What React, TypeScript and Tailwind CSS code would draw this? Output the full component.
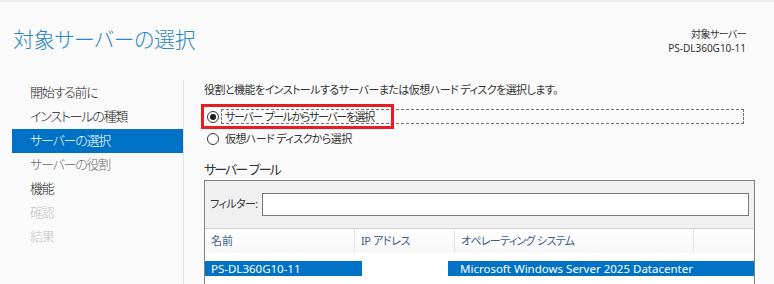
import React from 'react';

const navItems = [
  { label: '開始する前に', state: 'normal' },
  { label: 'インストールの種類', state: 'normal' },
  { label: 'サーバーの選択', state: 'active' },
  { label: 'サーバーの役割', state: 'soft' },
  { label: '機能', state: 'normal' },
  { label: '確認', state: 'disabled' },
  { label: '結果', state: 'disabled' },
];

const Radio: React.FC<{ checked?: boolean }> = ({ checked }) => (
  <span className="w-[12px] h-[12px] rounded-full border border-[#333] bg-white flex items-center justify-center shrink-0">
    {checked && <span className="w-[6px] h-[6px] rounded-full bg-[#1a1a1a]" />}
  </span>
);

const App: React.FC = () => {
  return (
    <div className="w-[774px] h-[284px] overflow-hidden bg-[#fafafa] border-t-2 border-[#eceff3] text-[#333] [font-family:'Noto_Sans','Noto_Sans_CJK_JP',sans-serif] [font-feature-settings:'palt']">
      {/* header */}
      <div className="flex justify-between items-start h-[78px]">
        <h1 className="ml-[13px] mt-[27px] text-[21px] font-light text-[#2b86c4] leading-none tracking-[-0.3px]">
          対象サーバーの選択
        </h1>
        <div className="mr-[28px] mt-[25px] text-right text-[10px] leading-[14px] text-[#333]">
          <div className="tracking-[-0.6px]">対象サーバー</div>
          <div>PS-DL360G10-11</div>
        </div>
      </div>

      <div className="flex">
        {/* nav */}
        <div className="w-[184px] pl-[12px] pt-[1px] border-r border-[#e3e3e3] h-[206px]">
          {navItems.map((item) => (
            <div
              key={item.label}
              className={
                'h-[24px] pl-[18px] flex items-center text-[13px] font-light tracking-[-1.2px] ' +
                (item.state === 'active'
                  ? 'bg-[#0072c6] text-white'
                  : item.state === 'disabled'
                  ? 'text-[#c4c4c4]'
                  : item.state === 'soft'
                  ? 'text-[#6a6a6a]'
                  : 'text-[#222]')
              }
            >
              {item.label}
            </div>
          ))}
        </div>

        {/* content */}
        <div className="flex-1 pl-[20px] text-[12px]">
          <p className="mt-[1px] leading-[18px] text-[11px] tracking-[-0.55px]">役割と機能をインストールするサーバーまたは仮想ハード ディスクを選択します。</p>

          <div className="mt-[5px] relative">
            <div className="absolute left-[-3px] top-[0px] w-[193px] h-[25px] border-[3px] border-[#e81c24]" />
            <div className="h-[25px] flex items-center pl-[3px]">
              <Radio checked />
              <span className="ml-[2px] pl-[3px] w-[523px] h-[15px] flex items-center border border-dashed border-[#707070] leading-none text-[11px] tracking-[-1.4px] whitespace-pre">
                サーバー  プールからサーバーを選択
              </span>
            </div>
            <div className="h-[19px] flex items-center pl-[3px]">
              <Radio />
              <span className="ml-[6px] leading-none text-[11px] tracking-[-0.6px]">仮想ハード ディスクから選択</span>
            </div>
          </div>

          <h2 className="mt-[11px] text-[13px] leading-[20px] text-[#333] tracking-[-2px] whitespace-pre">サーバー  プール</h2>

          <div className="mt-[1px] w-[551px] border border-[#828282] bg-white h-[120px]">
            <div className="bg-[#f0f0f0] h-[48px] flex items-center pl-[5px] pr-[5px] border-b border-[#d0d0d0]">
              <span className="mr-[4px] text-[11px] tracking-[-0.6px]">フィルター:</span>
              <div className="flex-1 h-[23px] bg-white border border-[#7a7a7a]" />
            </div>
            <div className="flex h-[24px] bg-gradient-to-b from-white to-[#f7f7f7] text-[#3b5f86] text-[11px]">
              <div className="w-[150px] pl-[6px] flex items-center border-r border-[#e4e4e4]">名前</div>
              <div className="w-[100px] pl-[6px] flex items-center border-r border-[#e4e4e4] tracking-[-0.4px]">IP アドレス</div>
              <div className="w-[239px] pl-[6px] flex items-center border-r border-[#e4e4e4] tracking-[-0.7px]">オペレーティング システム</div>
              <div className="flex-1" />
            </div>
            <div className="flex h-[15px] mt-[8px] text-[11.5px] leading-none">
              <div className="w-[157px] pl-[6px] bg-[#0072c6] text-white flex items-center">PS-DL360G10-11</div>
              <div className="w-[86px]" />
              <div className="flex-1 pl-[12px] bg-[#0072c6] text-white flex items-center">Microsoft Windows Server 2025 Datacenter</div>
            </div>
          </div>
        </div>
      </div>
    </div>
  );
};

export default App;
